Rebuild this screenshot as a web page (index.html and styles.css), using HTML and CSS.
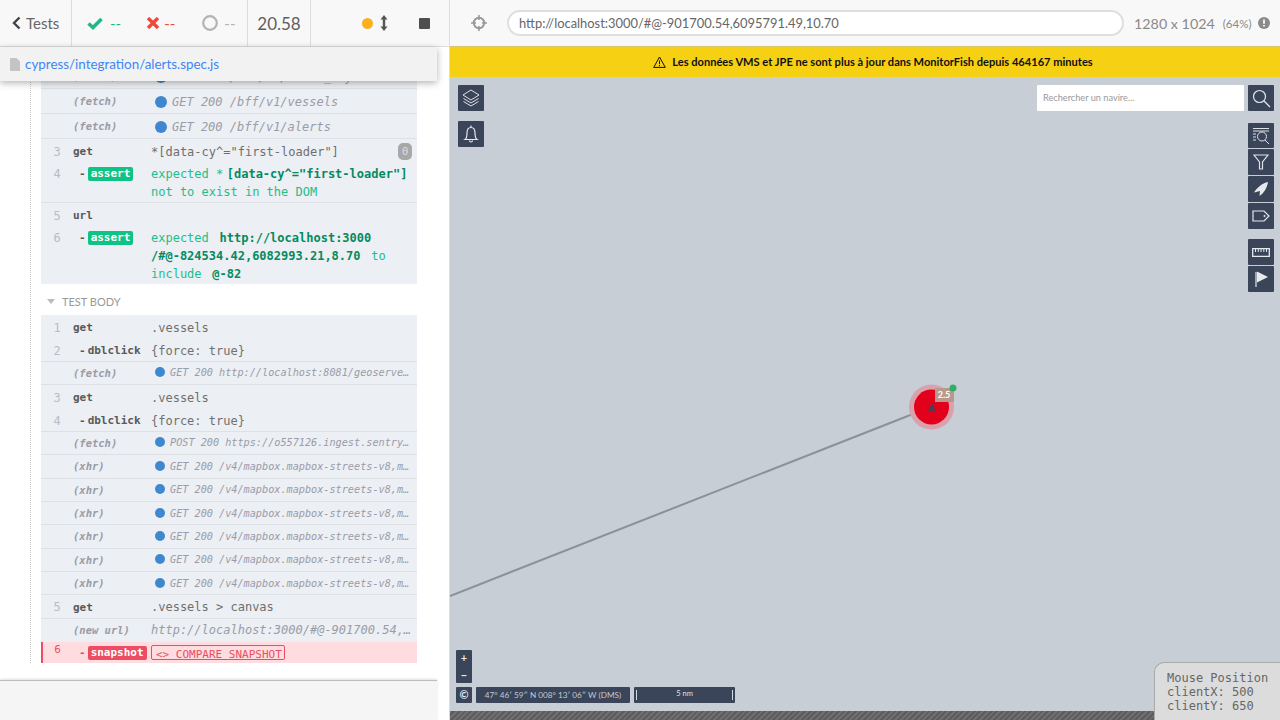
FILE: index.html
```html
<!DOCTYPE html>
<html lang="fr">
<head>
    <meta charset="UTF-8">
    <title>alerts.spec.js</title>
    <link rel="stylesheet" href="styles.css">
</head>
<body>
    <div class="app">
        <div class="reporter">
            <div class="stats-bar">
                <div class="back">
                    <svg width="9" height="14" viewBox="0 0 9 14"><path d="M7.5 1.5 2 7l5.5 5.5" fill="none" stroke="#444" stroke-width="2.4"/></svg>
                    <span>Tests</span>
                </div>
                <div class="stats">
                    <svg class="stat-icon" width="16" height="13" viewBox="0 0 16 13"><path d="M1.5 6.5 6 10.5 14.5 2" fill="none" stroke="#1fb886" stroke-width="3.6"/></svg>
                    <span class="count count-pass">--</span>
                    <svg class="stat-icon icon-fail" width="12" height="12" viewBox="0 0 12 12"><path d="M1 1l10 10M11 1 1 11" fill="none" stroke="#ef4a3c" stroke-width="3.4"/></svg>
                    <span class="count count-fail">--</span>
                    <svg class="stat-icon icon-pending" width="16" height="16" viewBox="0 0 16 16"><circle cx="8" cy="8" r="6.8" fill="none" stroke="#b3b3b3" stroke-width="2.2"/></svg>
                    <span class="count count-pending">--</span>
                </div>
                <div class="duration">20.58</div>
                <div class="controls">
                    <span class="dot"></span>
                    <svg class="updown" width="8" height="16" viewBox="0 0 8 16"><path d="M4 0 7.5 4.5H5.2v7h2.3L4 16 .5 11.5h2.3v-7H.5z" fill="#555"/></svg>
                    <span class="stop"></span>
                </div>
            </div>

            <div class="spec-bar">
                <svg width="10" height="13" viewBox="0 0 10 13"><path d="M0 0h6.5L10 3.5V13H0z" fill="#c4c4c4"/></svg>
                <span>cypress/integration/alerts.spec.js</span>
            </div>

            <div class="runnable">
                <div class="cmd-list">
                    <div class="cmd cmd-tall cmd-line">
                        <span class="num"></span><span class="method method-event">(fetch)</span>
                        <span class="msg msg-event"><i class="bullet"></i>GET 200 /bff/v1/fleet_key</span>
                    </div>
                    <div class="cmd cmd-tall cmd-line">
                        <span class="num"></span><span class="method method-event">(fetch)</span>
                        <span class="msg msg-event"><i class="bullet"></i>GET 200 /bff/v1/vessels</span>
                    </div>
                    <div class="cmd cmd-tall cmd-line">
                        <span class="num"></span><span class="method method-event">(fetch)</span>
                        <span class="msg msg-event"><i class="bullet"></i>GET 200 /bff/v1/alerts</span>
                    </div>
                    <div class="cmd cmd-get">
                        <span class="num">3</span><span class="method">get</span>
                        <span class="msg">*[data-cy^="first-loader"]</span>
                        <span class="found">0</span>
                    </div>
                    <div class="cmd cmd-assert cmd-line">
                        <span class="num">4</span>
                        <span class="method method-child">-<b class="badge">assert</b></span>
                        <span class="msg-assert">expected *<strong class="first">[data-cy^="first-loader"]</strong><br>not to exist in the DOM</span>
                    </div>
                    <div class="cmd cmd-get">
                        <span class="num">5</span><span class="method">url</span>
                    </div>
                    <div class="cmd cmd-assert">
                        <span class="num">6</span>
                        <span class="method method-child">-<b class="badge">assert</b></span>
                        <span class="msg-assert">expected <strong>http://localhost:3000</strong><br><strong class="first-line">/#@-824534.42,6082993.21,8.70</strong> to<br>include <strong>@-82</strong></span>
                    </div>
                </div>

                <div class="section-title"><i class="caret"></i>Test body</div>

                <div class="cmd-list">
                    <div class="cmd"><span class="num">1</span><span class="method">get</span><span class="msg">.vessels</span></div>
                    <div class="cmd cmd-line"><span class="num">2</span><span class="method method-child">-<b>dblclick</b></span><span class="msg">{force: true}</span></div>
                    <div class="cmd cmd-line"><span class="num"></span><span class="method method-event">(fetch)</span><span class="msg msg-event msg-small"><i class="bullet"></i>GET 200 http://localhost:8081/geoserve…</span></div>
                    <div class="cmd"><span class="num">3</span><span class="method">get</span><span class="msg">.vessels</span></div>
                    <div class="cmd cmd-line"><span class="num">4</span><span class="method method-child">-<b>dblclick</b></span><span class="msg">{force: true}</span></div>
                    <div class="cmd cmd-line"><span class="num"></span><span class="method method-event">(fetch)</span><span class="msg msg-event msg-small"><i class="bullet"></i>POST 200 https://o557126.ingest.sentry…</span></div>
                    <div class="cmd cmd-line"><span class="num"></span><span class="method method-event">(xhr)</span><span class="msg msg-event msg-small"><i class="bullet"></i>GET 200 /v4/mapbox.mapbox-streets-v8,m…</span></div>
                    <div class="cmd cmd-line"><span class="num"></span><span class="method method-event">(xhr)</span><span class="msg msg-event msg-small"><i class="bullet"></i>GET 200 /v4/mapbox.mapbox-streets-v8,m…</span></div>
                    <div class="cmd cmd-line"><span class="num"></span><span class="method method-event">(xhr)</span><span class="msg msg-event msg-small"><i class="bullet"></i>GET 200 /v4/mapbox.mapbox-streets-v8,m…</span></div>
                    <div class="cmd cmd-line"><span class="num"></span><span class="method method-event">(xhr)</span><span class="msg msg-event msg-small"><i class="bullet"></i>GET 200 /v4/mapbox.mapbox-streets-v8,m…</span></div>
                    <div class="cmd cmd-line"><span class="num"></span><span class="method method-event">(xhr)</span><span class="msg msg-event msg-small"><i class="bullet"></i>GET 200 /v4/mapbox.mapbox-streets-v8,m…</span></div>
                    <div class="cmd cmd-line"><span class="num"></span><span class="method method-event">(xhr)</span><span class="msg msg-event msg-small"><i class="bullet"></i>GET 200 /v4/mapbox.mapbox-streets-v8,m…</span></div>
                    <div class="cmd cmd-line"><span class="num">5</span><span class="method">get</span><span class="msg">.vessels &gt; canvas</span></div>
                    <div class="cmd"><span class="num"></span><span class="method method-event">(new url)</span><span class="msg msg-url">http://localhost:3000/#@-901700.54,…</span></div>
                    <div class="cmd cmd-snapshot">
                        <span class="num">6</span>
                        <span class="method method-child">-<b class="badge badge-red">snapshot</b></span>
                        <span class="compare">&lt;&gt; COMPARE SNAPSHOT</span>
                    </div>
                </div>
            </div>

            <div class="reporter-footer"></div>
        </div>

        <div class="runner">
            <div class="url-bar">
                <svg class="target" width="16" height="16" viewBox="0 0 16 16"><g fill="none" stroke="#9a9a9a"><circle cx="8" cy="8" r="5.2" stroke-width="2"/><path d="M8 0v5M8 11v5M0 8h5M11 8h5" stroke-width="1.6"/></g></svg>
                <div class="url-input">http://localhost:3000/#@-901700.54,6095791.49,10.70</div>
                <span class="viewport">1280 x 1024</span>
                <span class="scale">(64%)</span>
                <svg class="info" width="12" height="12" viewBox="0 0 12 12"><circle cx="6" cy="6" r="6" fill="#8a8a8a"/><path d="M6 2.4v4.4M6 8v1.6" stroke="#fff" stroke-width="1.7"/></svg>
            </div>

            <div class="banner">
                <svg width="13" height="12" viewBox="0 0 13 12"><path d="M6.5 1 12.3 11.4H.7z" fill="none" stroke="#111" stroke-width="1"/><path d="M6.5 4.5v3.6M6.5 9v1.2" stroke="#111"/></svg>
                <span>Les données VMS et JPE ne sont plus à jour dans MonitorFish depuis 464167 minutes</span>
            </div>

            <div class="map">
                <svg class="vessel-layer" width="830" height="633" viewBox="0 0 830 633">
                    <line x1="0" y1="518" x2="468" y2="334" stroke="#8b919b" stroke-width="2"/>
                    <circle cx="481.500" cy="329" r="22.500" fill="#d9a1ab"/>
                    <circle cx="481.500" cy="329" r="17.500" fill="#e2001a"/>
                    <path d="M482 324.500l3.500 9-3.500-1-4 1z" fill="#3b4559"/>
                    <rect x="485" y="310" width="19" height="14" fill="#b89a8d"/>
                    <text class="vessel-speed" x="494" y="320" text-anchor="middle">2.5</text>
                    <circle cx="503" cy="310" r="3.500" fill="#2eaf6c"/>
                </svg>

                <div class="tools-left">
                    <div class="map-btn">
                        <svg width="20" height="20" viewBox="0 0 20 20"><g fill="none" stroke="#dfe3e8"><path d="M10 2l8 5-8 5-8-5z"/><path d="M2.500 10.500 10 15l7.500-4.500"/><path d="M2.500 13.500 10 18l7.500-4.500"/></g></svg>
                    </div>
                    <div class="map-btn">
                        <svg width="20" height="20" viewBox="0 0 20 20"><g fill="none" stroke="#e6e9ed" stroke-width="1.200"><path d="M4 15.500c1.500-1 2-3 2-6.500 0-3.500 1.500-5.500 4-5.500s4 2 4 5.500c0 3.500.5 5.500 2 6.500z"/><path d="M8.500 16.500a1.500 1.500 0 0 0 3 0"/><path d="M10 1.500v2"/></g></svg>
                    </div>
                </div>

                <div class="tools-right">
                    <div class="search">
                        <div class="search-input">Rechercher un navire...</div>
                        <div class="map-btn">
                            <svg width="20" height="20" viewBox="0 0 20 20"><g fill="none" stroke="#e6e9ed" stroke-width="1.200"><circle cx="8.500" cy="8.500" r="6"/><path d="M13 13l6 6"/></g></svg>
                        </div>
                    </div>
                    <div class="tool-group">
                        <div class="map-btn btn-short">
                            <svg width="18" height="18" viewBox="0 0 18 18"><g fill="none" stroke="#dfe3e8"><path d="M1 1.500h16M1 4h16M1 7h3M1 10h3M1 13h3"/><circle cx="10" cy="9.500" r="4.500"/><path d="M13 13l4 4"/></g></svg>
                        </div>
                        <div class="map-btn">
                            <svg width="16" height="16" viewBox="0 0 16 16"><path d="M1 1h14L9.500 8v7h-3V8z" fill="none" stroke="#dfe3e8" stroke-width="1.200"/></svg>
                        </div>
                        <div class="map-btn">
                            <svg width="16" height="16" viewBox="0 0 16 16"><path d="M15 1C9 2 4 7 1 11.500L7 10l-.5 5C11 12 14 7 15 1z" fill="#e6e9ed"/></svg>
                        </div>
                        <div class="map-btn">
                            <svg width="18" height="12" viewBox="0 0 18 12"><path d="M1 1h11l5 5-5 5H1z" fill="none" stroke="#e6e9ed" stroke-width="1.200"/><circle cx="12.500" cy="6" r="1" fill="#e6e9ed"/></svg>
                        </div>
                    </div>
                    <div class="tool-group">
                        <div class="map-btn">
                            <svg width="18" height="9" viewBox="0 0 18 9"><path d="M.7.700h16.600v7.600H.7z" fill="none" stroke="#e6e9ed" stroke-width="1.300"/><path d="M3.500 1v3M6.300 1v3M9 1v3M11.800 1v3M14.500 1v3" stroke="#e6e9ed"/></svg>
                        </div>
                        <div class="map-btn">
                            <svg width="16" height="18" viewBox="0 0 16 18"><path d="M3 2v15" stroke="#b9bec6" stroke-width="1.600"/><path d="M4 1.500l11 5.500-11 5.500z" fill="#e6e9ed"/></svg>
                        </div>
                    </div>
                </div>

                <div class="tools-bottom">
                    <div class="zoom-box">
                        <div class="zoom-btn">+</div>
                        <div class="zoom-btn">−</div>
                    </div>
                    <div class="info-row">
                        <div class="map-chip chip-attrib">©</div>
                        <div class="map-chip chip-coords">47° 46′ 59″ N 008° 13′ 06″ W (DMS)</div>
                        <div class="map-chip chip-scale">5 nm</div>
                    </div>
                </div>
            </div>
            <div class="ground"></div>
        </div>
    </div>

    <div class="mouse-box">Mouse Position<br>clientX: 500<br>clientY: 650</div>
</body>
</html>
```
FILE: styles.css
```css
* {
    box-sizing: border-box;
}
html, body {
    height: 100%;
}
body {
    margin: 0;
    overflow: hidden;
    font-family: Lato, "Open Sans", sans-serif;
    background: #fff;
}
.app {
    display: flex;
    height: 720px;
}

/* left panel */
.reporter {
    position: relative;
    display: flex;
    flex-direction: column;
    width: 450px;
    height: 720px;
    background: #fff;
    border-right: 1px solid #ddd;
    overflow: hidden;
}
.stats-bar {
    display: flex;
    flex: none;
    height: 47px;
    background: #f8f8f8;
    border-bottom: 1px solid #ddd;
    color: #666;
}
.back {
    display: flex;
    align-items: center;
    gap: 5px;
    width: 72px;
    padding-left: 12px;
    border-right: 1px solid #ddd;
    font-size: 15px;
}
.stats {
    display: flex;
    align-items: center;
    width: 176px;
    padding-left: 15px;
    border-right: 1px solid #ddd;
}
.count {
    margin-left: 7px;
    font-size: 15px;
}
.count-pass { color: #1fb886; }
.count-fail { color: #ef4a3c; margin-left: 5px; }
.count-pending { color: #b3b3b3; margin-left: 6px; }
.icon-fail { margin-left: 26px; }
.icon-pending { margin-left: 27px; }
.duration {
    display: flex;
    align-items: center;
    justify-content: center;
    width: 63px;
    border-right: 1px solid #ddd;
    font-size: 17px;
    color: #5f5f5f;
}
.controls {
    display: flex;
    align-items: center;
    flex: 1;
    padding-left: 51px;
}
.dot {
    width: 11px;
    height: 11px;
    border-radius: 50%;
    background: #fbb01c;
}
.updown {
    margin-left: 7px;
}
.stop {
    width: 11px;
    height: 11px;
    margin-left: 31px;
    border-radius: 1px;
    background: #4f4f4f;
}
.spec-bar {
    position: absolute;
    top: 47px;
    left: 0;
    z-index: 2;
    display: flex;
    align-items: center;
    gap: 5px;
    width: 437px;
    height: 34px;
    padding-left: 10px;
    background: #f2f2f2;
    box-shadow: 0 2px 7px rgba(0, 0, 0, 0.3);
    font-size: 13.4px;
    color: #3d86f5;
}
.runnable {
    flex: none;
    width: 387px;
    margin-left: 30px;
    padding: 17px 0 0 10px;
    border-left: 1px dotted #c8c8c8;
}
.cmd-list {
    background: #eceff3;
    font-family: "DejaVu Sans Mono", "Liberation Mono", monospace;
}
.cmd {
    display: flex;
    align-items: center;
    height: 23.36px;
    font-size: 12px;
    color: #6f6f6f;
}
.cmd-tall {
    height: 25px;
}
.cmd-get {
    height: 23px;
}
.cmd-line {
    border-bottom: 1px solid #dde1e6;
}
.num {
    flex: none;
    width: 32px;
    margin-top: 2px;
    text-align: center;
    color: #b9bcc6;
}
.method {
    flex: none;
    width: 78px;
    margin-top: 2px;
    font-size: 11px;
    font-weight: bold;
    color: #595959;
}
.method-event {
    margin-top: 0;
    font-size: 10.5px;
    font-style: italic;
    color: #9a9ca8;
}
.method-child {
    padding-left: 6px;
}
.method-child b {
    margin-left: 2px;
}
.msg {
    flex: 1;
    min-width: 0;
    margin-top: 2px;
    white-space: nowrap;
}
.msg-event {
    padding-left: 4px;
    font-style: italic;
    color: #9a9ca8;
}
.msg-small {
    margin-top: 0;
    font-size: 10.2px;
}
.msg-url {
    margin-top: 0;
    font-style: italic;
    color: #9a9ca8;
}
.bullet {
    display: inline-block;
    width: 12px;
    height: 12px;
    margin-right: 5px;
    border-radius: 50%;
    background: #3f88cf;
    vertical-align: -2px;
}
.msg-small .bullet {
    width: 10px;
    height: 10px;
    vertical-align: -1px;
}
.found {
    flex: none;
    width: 14px;
    height: 17px;
    margin: 2px 5px 0 0;
    border-radius: 5px;
    background: #a8a8a8;
    font-size: 11px;
    line-height: 17px;
    text-align: center;
    color: #dcdcdc;
}
.cmd-assert {
    align-items: flex-start;
    height: 41px;
    padding-top: 3px;
}
.cmd-assert + .cmd-get + .cmd-assert {
    height: 58px;
}
.cmd-assert .num,
.cmd-assert .method {
    margin-top: 0;
    line-height: 18px;
}
.badge {
    display: inline-block;
    padding: 0 3px;
    border-radius: 2px;
    background: #0fc286;
    line-height: 14px;
    font-size: 11px;
    color: #fff;
}
.badge-red {
    background: #ec4d62;
}
.msg-assert {
    line-height: 18px;
    color: #1ebd8a;
    white-space: nowrap;
}
.msg-assert strong {
    margin: 0 3.5px;
    color: #058a60;
}
.msg-assert .first {
    margin-right: 0;
}
.msg-assert .first-line {
    margin-left: 0;
}
.section-title {
    display: flex;
    align-items: center;
    height: 31px;
    padding: 4px 0 0 6px;
    font-size: 11px;
    text-transform: uppercase;
    color: #999;
}
.caret {
    width: 0;
    height: 0;
    margin-right: 7px;
    border-left: 4px solid transparent;
    border-right: 4px solid transparent;
    border-top: 5px solid #bbb;
}
.cmd-snapshot {
    height: 21px;
    border-left: 2px solid #ec4d62;
    background: #ffdcdf;
    overflow: hidden;
}
.cmd-snapshot .num {
    align-self: flex-start;
    width: 29px;
    margin: 1px 1px 0 0;
    font-size: 11px;
    color: #e5505f;
}
.cmd-snapshot .method {
    margin-top: 0;
    color: #e5505f;
}
.compare {
    align-self: flex-start;
    height: 15px;
    margin-top: 3px;
    padding: 2px 0 0 4px;
    width: 134px;
    border: 1px solid #ec4d62;
    border-radius: 2px;
    font-size: 11px;
    line-height: 13px;
    text-decoration: underline;
    white-space: nowrap;
    color: #ec4d62;
}
.reporter-footer {
    flex: none;
    width: 437px;
    height: 40px;
    margin-top: auto;
    background: #f5f5f5;
    border-top: 1px solid #bdbdbd;
    box-shadow: 0 -1px 2px rgba(0, 0, 0, 0.12);
}

/* right panel */
.runner {
    display: flex;
    flex-direction: column;
    flex: 1;
    min-width: 0;
}
.url-bar {
    display: flex;
    align-items: center;
    flex: none;
    height: 46px;
    padding-left: 21px;
    background: #f8f8f8;
    color: #8a8a8a;
}
.url-input {
    width: 617px;
    height: 26px;
    margin-left: 20px;
    padding-left: 10px;
    background: #fff;
    border: 2px solid #dedede;
    border-radius: 13px;
    font-size: 12.9px;
    line-height: 22px;
    color: #666;
}
.viewport {
    margin-left: 10px;
    font-size: 14.3px;
}
.scale {
    margin-left: 8px;
    font-size: 11.5px;
}
.info {
    margin-left: 7px;
}
.banner {
    display: flex;
    align-items: center;
    justify-content: center;
    gap: 6px;
    flex: none;
    height: 32px;
    padding: 0 0 1px 16px;
    background: #f6d012;
    border-top: 1px solid #d8c46a;
    border-bottom: 1px solid #d9d3a5;
    font-size: 11.1px;
    font-weight: bold;
    color: #111;
}
.map {
    position: relative;
    flex: none;
    height: 633px;
    background: #c7ced6;
}
.ground {
    flex: 1;
    background: repeating-linear-gradient(135deg, #6f6f6f 0 2px, #5c5c5c 2px 4px);
}
.vessel-layer {
    position: absolute;
    top: 0;
    left: 0;
}
.vessel-speed {
    font-family: Lato, sans-serif;
    font-size: 9px;
    font-weight: bold;
    fill: #fff;
}
.map-btn {
    display: flex;
    align-items: center;
    justify-content: center;
    flex: none;
    width: 26px;
    height: 26px;
    border-radius: 1px;
    background: #3b4559;
}
.btn-short {
    height: 25px;
}
.tools-left {
    position: absolute;
    top: 7px;
    left: 8px;
    display: flex;
    flex-direction: column;
    gap: 10px;
}
.tools-right {
    position: absolute;
    top: 7px;
    right: 6px;
    display: flex;
    flex-direction: column;
    align-items: flex-end;
}
.search {
    display: flex;
    gap: 4px;
}
.search-input {
    width: 207px;
    height: 26px;
    padding-left: 6px;
    background: #fff;
    border-radius: 1px;
    font-size: 9.2px;
    line-height: 26px;
    color: #999;
}
.tool-group {
    display: flex;
    flex-direction: column;
    gap: 1px;
    margin-top: 12px;
}
.tool-group + .tool-group {
    margin-top: 10px;
}
.tools-bottom {
    position: absolute;
    left: 6px;
    bottom: 8px;
}
.zoom-box {
    width: 16px;
    height: 33px;
    margin-bottom: 4px;
    border-radius: 1px;
    background: #3b4559;
}
.zoom-btn {
    height: 16.5px;
    font-size: 11px;
    font-weight: bold;
    line-height: 16px;
    text-align: center;
    color: #e6e9ed;
}
.info-row {
    display: flex;
    gap: 4px;
}
.map-chip {
    height: 16px;
    border-radius: 1px;
    background: #3b4559;
    font-size: 8.2px;
    line-height: 16px;
    text-align: center;
    color: #c3c9d2;
}
.chip-attrib {
    width: 16px;
    font-size: 11px;
    font-weight: bold;
    color: #e6e9ed;
}
.chip-coords {
    width: 154px;
}
.chip-scale {
    width: 101px;
    background: linear-gradient(#d5dae0, #d5dae0) left 2px top 3px / 1px 10px no-repeat,
        linear-gradient(#d5dae0, #d5dae0) right 2px top 3px / 1px 10px no-repeat,
        #3b4559;
    font-size: 7.5px;
    line-height: 13px;
    color: #dfe3e8;
}
.mouse-box {
    position: fixed;
    right: 0;
    bottom: 0;
    width: 126px;
    height: 58px;
    padding: 8px 0 0 12px;
    background: #dcdcdc;
    border: 1px solid #aaa;
    border-width: 1px 0 0 1px;
    border-top-left-radius: 10px;
    font-family: "DejaVu Sans Mono", monospace;
    font-size: 12px;
    line-height: 14px;
    color: #666;
}
```
